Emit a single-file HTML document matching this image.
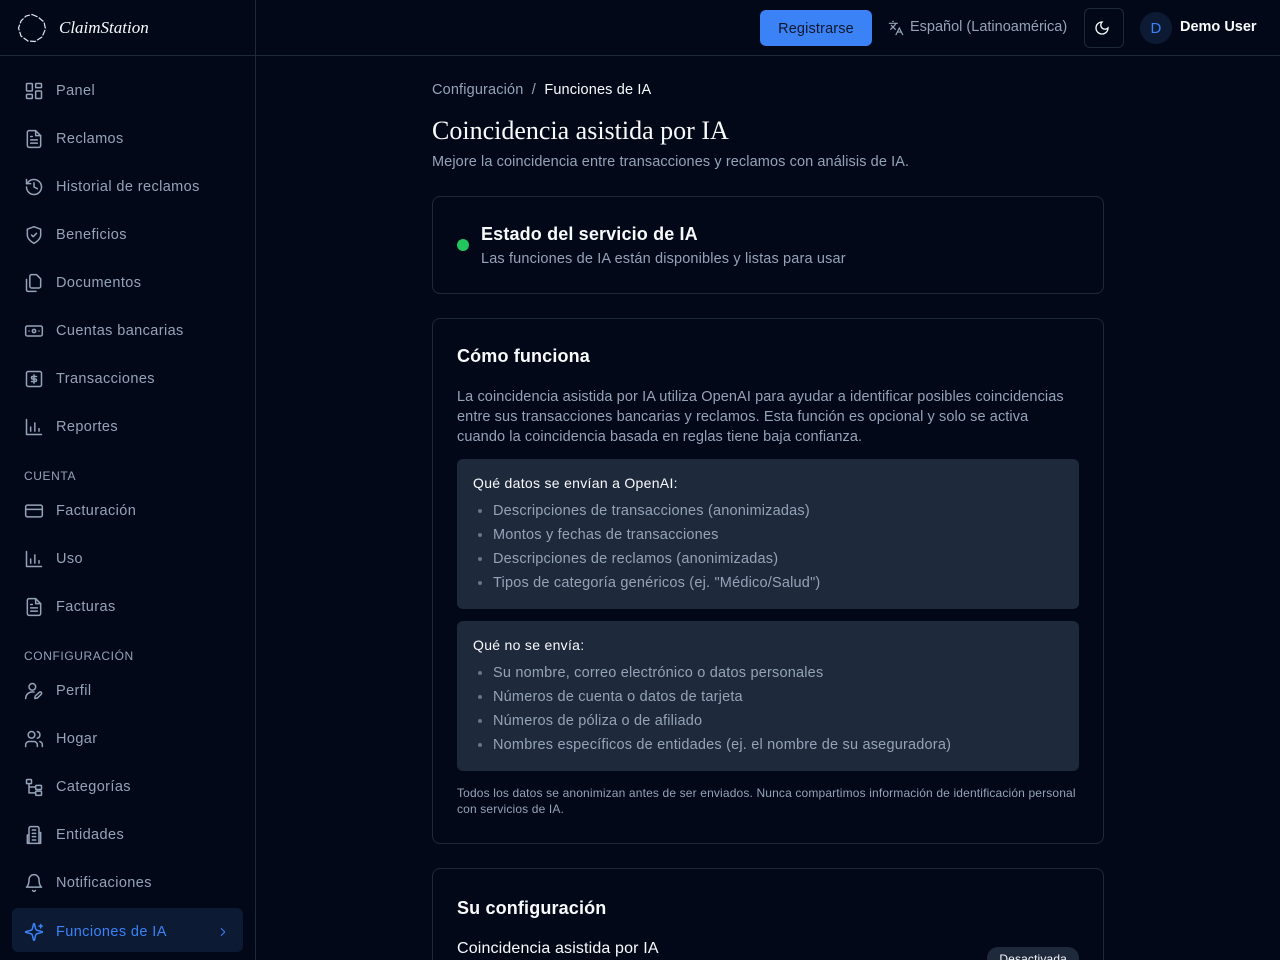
<!DOCTYPE html>
<html><head><meta charset="utf-8"><style>
*{box-sizing:border-box;margin:0;padding:0}
html{width:1280px;height:960px;overflow:hidden;background:#020817}
body{width:1280px;height:960px;overflow:hidden;background:#020817;font-family:"Liberation Sans",sans-serif;color:#f8fafc;position:relative;letter-spacing:.15px}
.hdr{position:absolute;left:0;top:0;width:1280px;height:56px;border-bottom:1px solid #1e293b}
.side{position:absolute;left:0;top:0;width:256px;height:960px;border-right:1px solid #1e293b}
.logo{position:absolute;left:17px;top:13px}
.logotxt{position:absolute;left:59px;top:18px;font-family:"Liberation Serif",serif;font-style:italic;font-size:17px;color:#f8fafc;letter-spacing:0}
.nav{position:absolute;left:12px;width:231px;height:44px;display:flex;align-items:center;padding-left:12px;padding-top:3px;font-size:14.5px;color:#94a3b8;letter-spacing:.4px}
.nav svg{width:20px;height:20px;margin-right:12px;fill:none;stroke:#94a3b8;stroke-width:1.8;stroke-linecap:round;stroke-linejoin:round}
.nav.act{background:#0c1a33;border-radius:6px;color:#3b82f6}
.nav.act svg{stroke:#3b82f6}
.sec{position:absolute;left:24px;font-size:12px;color:#94a3b8;letter-spacing:.6px}
.btn{position:absolute;left:760px;top:10px;width:112px;height:36px;padding-top:1px;background:#3b82f6;border-radius:6px;color:#0f172a;font-size:14.5px;display:flex;align-items:center;justify-content:center}
.card{position:absolute;left:432px;width:672px;border:1px solid #1e293b;border-radius:8px}
.box{background:#1e293b;border-radius:6px;padding:16px 16px 14px;margin-top:12px}
.box h4{font-size:14px;font-weight:normal;color:#f8fafc;margin-bottom:8px;letter-spacing:.3px}
.box li{font-size:14.5px;color:#94a3b8;line-height:24px;margin-left:20px;letter-spacing:.2px}
.box li::marker{color:#64748b}
</style></head><body>
<div class="hdr"></div>
<div class="side">
<svg class="logo" width="30" height="30" viewBox="0 0 30 30"><path d="M15 1.5 L21 4 L27 9 L28.5 16 L25 24 L18 28.5 L11 28 L4 23 L1.5 15 L4 8 L9 3 Z" fill="none" stroke="#e2e8f0" stroke-width="1.2" stroke-dasharray="6 1.5"/></svg>
<div class="logotxt">ClaimStation</div>
</div>
<div class="nav" style="top:67px"><svg viewBox="0 0 24 24"><rect x="3" y="3" width="7" height="9" rx="1"/><rect x="14" y="3" width="7" height="5" rx="1"/><rect x="14" y="12" width="7" height="9" rx="1"/><rect x="3" y="16" width="7" height="5" rx="1"/></svg>Panel</div>
<div class="nav" style="top:115px"><svg viewBox="0 0 24 24"><path d="M14 2H6a2 2 0 0 0-2 2v16a2 2 0 0 0 2 2h12a2 2 0 0 0 2-2V8z"/><path d="M14 2v6h6M8 13h8M8 17h8M8 9h2"/></svg>Reclamos</div>
<div class="nav" style="top:163px"><svg viewBox="0 0 24 24"><path d="M3 12a9 9 0 1 0 9-9 9.75 9.75 0 0 0-6.74 2.740L3 8"/><path d="M3 3v5h5M12 7v5l4 2"/></svg>Historial de reclamos</div>
<div class="nav" style="top:211px"><svg viewBox="0 0 24 24"><path d="M12 22s8-4 8-10V5l-8-3-8 3v7c0 6 8 10 8 10z"/><path d="m9 12 2 2 4-4"/></svg>Beneficios</div>
<div class="nav" style="top:259px"><svg viewBox="0 0 24 24"><path d="M15 2H9a2 2 0 0 0-2 2v12a2 2 0 0 0 2 2h9a2 2 0 0 0 2-2V7z"/><path d="M3 7.6v12.8A1.6 1.6 0 0 0 4.6 22h9.8"/></svg>Documentos</div>
<div class="nav" style="top:307px"><svg viewBox="0 0 24 24"><rect x="2" y="6" width="20" height="12" rx="2"/><circle cx="12" cy="12" r="2"/><path d="M6 12h.01M18 12h.01"/></svg>Cuentas bancarias</div>
<div class="nav" style="top:355px"><svg viewBox="0 0 24 24"><rect x="3" y="3" width="18" height="18" rx="2"/><path d="M12 17V7M15 9h-4.5a1.5 1.5 0 0 0 0 3h3a1.5 1.5 0 0 1 0 3H9"/></svg>Transacciones</div>
<div class="nav" style="top:403px"><svg viewBox="0 0 24 24"><path d="M3 3v18h18M8 17v-5M13 17V7M18 17v-3"/></svg>Reportes</div>
<div class="sec" style="top:469px">CUENTA</div>
<div class="nav" style="top:487px"><svg viewBox="0 0 24 24"><rect x="2" y="5" width="20" height="14" rx="2"/><path d="M2 10h20"/></svg>Facturación</div>
<div class="nav" style="top:535px"><svg viewBox="0 0 24 24"><path d="M3 3v18h18M8 17v-5M13 17V7M18 17v-3"/></svg>Uso</div>
<div class="nav" style="top:583px"><svg viewBox="0 0 24 24"><path d="M14 2H6a2 2 0 0 0-2 2v16a2 2 0 0 0 2 2h12a2 2 0 0 0 2-2V8z"/><path d="M14 2v6h6M8 13h8M8 17h8M8 9h2"/></svg>Facturas</div>
<div class="sec" style="top:649px">CONFIGURACIÓN</div>
<div class="nav" style="top:667px"><svg viewBox="0 0 24 24"><circle cx="10" cy="7" r="4"/><path d="M2 21a8 8 0 0 1 10-7.7M18.4 13.6a1.6 1.6 0 0 1 2.3 2.3L16 20.5l-3 .5.5-3z"/></svg>Perfil</div>
<div class="nav" style="top:715px"><svg viewBox="0 0 24 24"><circle cx="9" cy="7" r="4"/><path d="M16 21v-2a4 4 0 0 0-4-4H6a4 4 0 0 0-4 4v2M22 21v-2a4 4 0 0 0-3-3.9M16 3.1a4 4 0 0 1 0 7.8"/></svg>Hogar</div>
<div class="nav" style="top:763px"><svg viewBox="0 0 24 24"><rect x="3" y="3" width="6" height="5" rx="1"/><rect x="14" y="10" width="7" height="5" rx="1"/><rect x="14" y="17" width="7" height="5" rx="1"/><path d="M6 8v11h8M6 12h8"/></svg>Categorías</div>
<div class="nav" style="top:811px"><svg viewBox="0 0 24 24"><path d="M6 22V4a2 2 0 0 1 2-2h8a2 2 0 0 1 2 2v18zM6 12H4v10h16V9h-2M10 6h4M10 10h4M10 14h4M10 18h4"/></svg>Entidades</div>
<div class="nav" style="top:859px"><svg viewBox="0 0 24 24"><path d="M6 8a6 6 0 0 1 12 0c0 7 3 9 3 9H3s3-2 3-9M10.3 21a1.94 1.94 0 0 0 3.4 0"/></svg>Notificaciones</div>
<div class="nav act" style="top:908px"><svg viewBox="0 0 24 24"><path d="M9.9 15.5a2 2 0 0 0-1.4-1.4L2.4 12.5a.5.5 0 0 1 0-1l6.1-1.6a2 2 0 0 0 1.4-1.4l1.6-6.1a.5.5 0 0 1 1 0l1.6 6.1a2 2 0 0 0 1.4 1.4l6.1 1.6a.5.5 0 0 1 0 1l-6.1 1.6a2 2 0 0 0-1.4 1.4l-1.6 6.1a.5.5 0 0 1-1 0zM20 3v4M22 5h-4"/></svg>Funciones de IA<svg style="position:absolute;left:204px;width:14px;height:14px" viewBox="0 0 24 24"><path d="m9 18 6-6-6-6"/></svg></div>

<div class="btn">Registrarse</div>
<svg style="position:absolute;left:888px;top:20px" width="16" height="16" viewBox="0 0 24 24" fill="none" stroke="#94a3b8" stroke-width="1.8" stroke-linecap="round"><path d="m5 8 6 6M4 14l6-6 2-3M2 5h12M7 2h1M22 22l-5-10-5 10M14 18h6"/></svg>
<div style="position:absolute;left:910px;top:19px;font-size:14.5px;color:#94a3b8;letter-spacing:0">Español (Latinoamérica)</div>
<div style="position:absolute;left:1084px;top:8px;width:40px;height:40px;border:1px solid #1e293b;border-radius:6px"></div>
<svg style="position:absolute;left:1094px;top:20px" width="16" height="16" viewBox="0 0 24 24" fill="none" stroke="#f8fafc" stroke-width="2"><path d="M12 3a6 6 0 0 0 9 9 9 9 0 1 1-9-9z"/></svg>
<div style="position:absolute;left:1140px;top:12px;width:32px;height:32px;border-radius:50%;background:#0c1a33;color:#3b82f6;font-size:15px;display:flex;align-items:center;justify-content:center">D</div>
<div style="position:absolute;left:1180px;top:19px;font-size:14.5px;font-weight:bold;color:#f8fafc;letter-spacing:0">Demo User</div>

<div style="position:absolute;left:432px;top:82px;font-size:14.5px;color:#94a3b8">Configuración &nbsp;/&nbsp; <span style="color:#f8fafc">Funciones de IA</span></div>
<div style="position:absolute;left:432px;top:116px;font-family:'Liberation Serif',serif;font-size:26px;color:#f8fafc;letter-spacing:0">Coincidencia asistida por IA</div>
<div style="position:absolute;left:432px;top:154px;font-size:14.5px;color:#94a3b8;letter-spacing:.1px">Mejore la coincidencia entre transacciones y reclamos con análisis de IA.</div>

<div class="card" style="top:196px;height:98px">
<div style="position:absolute;left:24px;top:42px;width:12px;height:12px;border-radius:50%;background:#22c55e"></div>
<div style="position:absolute;left:48px;top:27px;font-size:18px;font-weight:bold">Estado del servicio de IA</div>
<div style="position:absolute;left:48px;top:54px;font-size:14.5px;color:#94a3b8">Las funciones de IA están disponibles y listas para usar</div>
</div>

<div class="card" style="top:318px;height:526px;padding:27px 24px">
<div style="font-size:18px;font-weight:bold;margin-bottom:20px">Cómo funciona</div>
<div style="font-size:14.5px;color:#94a3b8;line-height:20px;letter-spacing:.1px">La coincidencia asistida por IA utiliza OpenAI para ayudar a identificar posibles coincidencias entre sus transacciones bancarias y reclamos. Esta función es opcional y solo se activa cuando la coincidencia basada en reglas tiene baja confianza.</div>
<div class="box"><h4>Qué datos se envían a OpenAI:</h4><ul><li>Descripciones de transacciones (anonimizadas)</li><li>Montos y fechas de transacciones</li><li>Descripciones de reclamos (anonimizadas)</li><li>Tipos de categoría genéricos (ej. "Médico/Salud")</li></ul></div>
<div class="box"><h4>Qué no se envía:</h4><ul><li>Su nombre, correo electrónico o datos personales</li><li>Números de cuenta o datos de tarjeta</li><li>Números de póliza o de afiliado</li><li>Nombres específicos de entidades (ej. el nombre de su aseguradora)</li></ul></div>
<div style="font-size:12px;color:#94a3b8;line-height:16px;margin-top:14px;letter-spacing:.15px">Todos los datos se anonimizan antes de ser enviados. Nunca compartimos información de identificación personal con servicios de IA.</div>
</div>

<div class="card" style="top:868px;height:120px">
<div style="position:absolute;left:24px;top:29px;font-size:18px;font-weight:bold">Su configuración</div>
<div style="position:absolute;left:24px;top:71px;font-size:16px">Coincidencia asistida por IA</div>
<div style="position:absolute;right:24px;top:78px;height:22px;padding:0 12px;border-radius:11px;background:#1e293b;font-size:12px;line-height:24px;color:#f8fafc">Desactivada</div>
</div>
</body></html>
